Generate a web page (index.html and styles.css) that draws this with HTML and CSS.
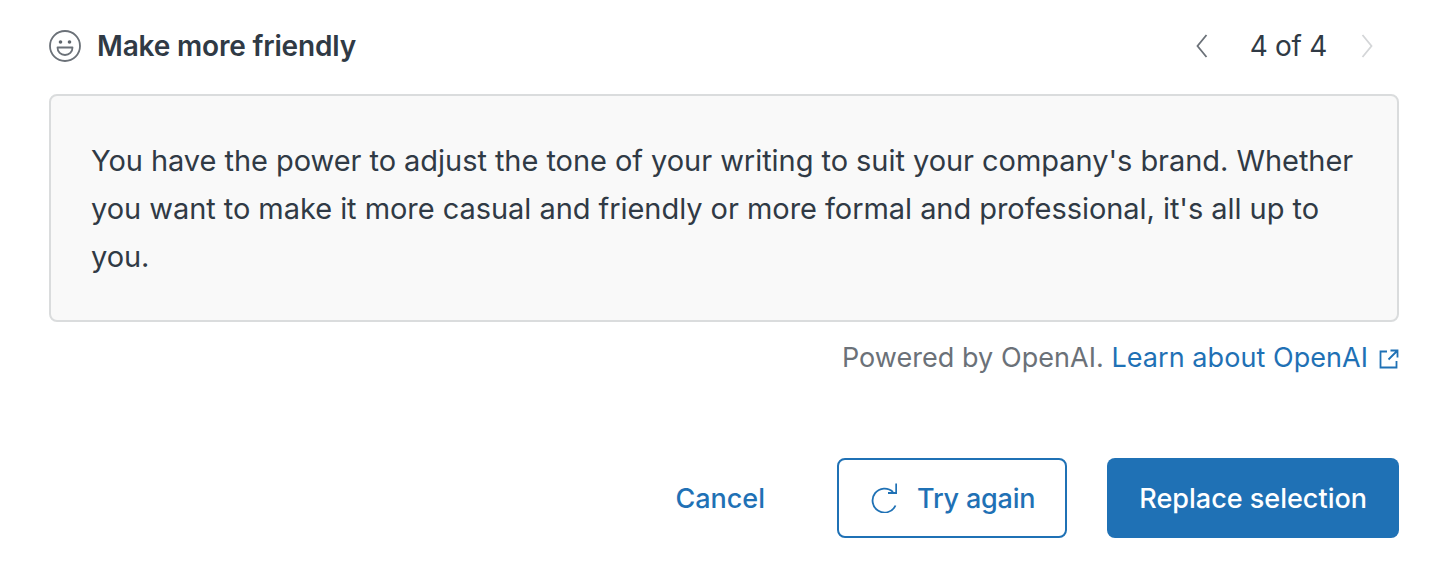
FILE: index.html
```html
<!DOCTYPE html>
<html lang="en">
<head>
<meta charset="utf-8">
<title>Make more friendly</title>
<link rel="stylesheet" href="styles.css">
</head>
<body>
<main class="panel">
  <header class="head">
    <div class="title-wrap">
      <svg class="smile" viewBox="0 0 32 32" fill="none" stroke="#6b7178" stroke-width="1.8">
        <circle cx="16" cy="16" r="15"/>
        <circle cx="11.500" cy="12" r="1.800" fill="#5f666d" stroke="none"/>
        <circle cx="20.500" cy="12" r="1.800" fill="#5f666d" stroke="none"/>
        <path d="M8.500 17.500h15c0 4.500-3.200 7.500-7.500 7.500s-7.500-3-7.500-7.500z" stroke-linejoin="round"/>
      </svg>
      <h1 class="title">Make more friendly</h1>
    </div>
    <nav class="pager">
      <svg class="chev" viewBox="0 0 14 24" fill="none" stroke="#6b7178" stroke-width="1.8"><path d="M11.500 1 2.500 12l9 11"/></svg>
      <span class="count">4 of 4</span>
      <svg class="chev" viewBox="0 0 14 24" fill="none" stroke="#d4d6d8" stroke-width="1.8"><path d="M2.500 1l9 11-9 11"/></svg>
    </nav>
  </header>
  <section class="result">You have the power to adjust the tone of your writing to suit your company's brand. Whether you want to make it more casual and friendly or more formal and professional, it's all up to you.</section>
  <p class="credit">Powered by OpenAI. <a class="link" href="#">Learn about OpenAI<svg class="ext" viewBox="0 0 20 20" fill="none" stroke="#1f71b5" stroke-width="1.8"><path d="M8 2.500H1.500v16h16V12M11.500 1.500h7v7M18 2l-8.500 8.500"/></svg></a></p>
  <footer class="actions">
    <button class="btn btn-text">Cancel</button>
    <button class="btn btn-outline"><svg class="retry" viewBox="0 0 26 30" fill="none" stroke="#1f71b5" stroke-width="1.8"><path d="M24.500 22.500A12 12 0 1 1 22 9M25.200 .5V10H17"/></svg>Try again</button>
    <button class="btn btn-solid">Replace selection</button>
  </footer>
</main>
</body>
</html>
```
FILE: styles.css
```css
* { box-sizing: border-box; }
html, body { margin: 0; padding: 0; background: #fff; }
body { font-family: Inter, "Liberation Sans", sans-serif; color: #303a45; }
.panel { width: 1448px; height: 574px; padding: 22px 49px 0; }
.head { display: flex; justify-content: space-between; align-items: center; height: 48px; }
.title-wrap { display: flex; align-items: center; gap: 16px; }
.smile { width: 32px; height: 32px; }
.title { margin: 0; font-size: 28px; font-weight: 600; line-height: 48px; letter-spacing: -0.17px; }
.pager { display: flex; align-items: center; gap: 34px; margin-right: 25px; font-size: 28px; }
.chev { width: 14px; height: 24px; }
.count { padding-left: 7px; margin-right: -1px; line-height: 48px; letter-spacing: -0.3px; }
.result { margin-top: 24px; height: 228px; padding: 41px 40px; background: #f9f9f9; border: 2px solid #dadcdd; border-radius: 8px; font-size: 29px; line-height: 48px; letter-spacing: -0.05px; }
.credit { margin: 12px 0 0; height: 48px; text-align: right; font-size: 27px; line-height: 48px; letter-spacing: 0.05px; color: #6b7178; }
.link { color: #1f71b5; text-decoration: none; }
.ext { width: 20px; height: 20px; margin-left: 11px; vertical-align: -2px; }
.actions { display: flex; justify-content: flex-end; align-items: center; gap: 40px; margin-top: 76px; }
.btn { height: 80px; border-radius: 8px; font: 500 27px/48px Inter, "Liberation Sans", sans-serif; display: flex; align-items: center; border: 2px solid transparent; background: none; color: #1f71b5; padding: 2px 30px 0; }
.btn-outline { border-color: #1f71b5; gap: 20px; padding-left: 32px; letter-spacing: -0.2px; }
.btn-solid { background: #1f71b5; color: #fff; }
.retry { width: 26px; height: 30px; margin-top: -2px; }
```
